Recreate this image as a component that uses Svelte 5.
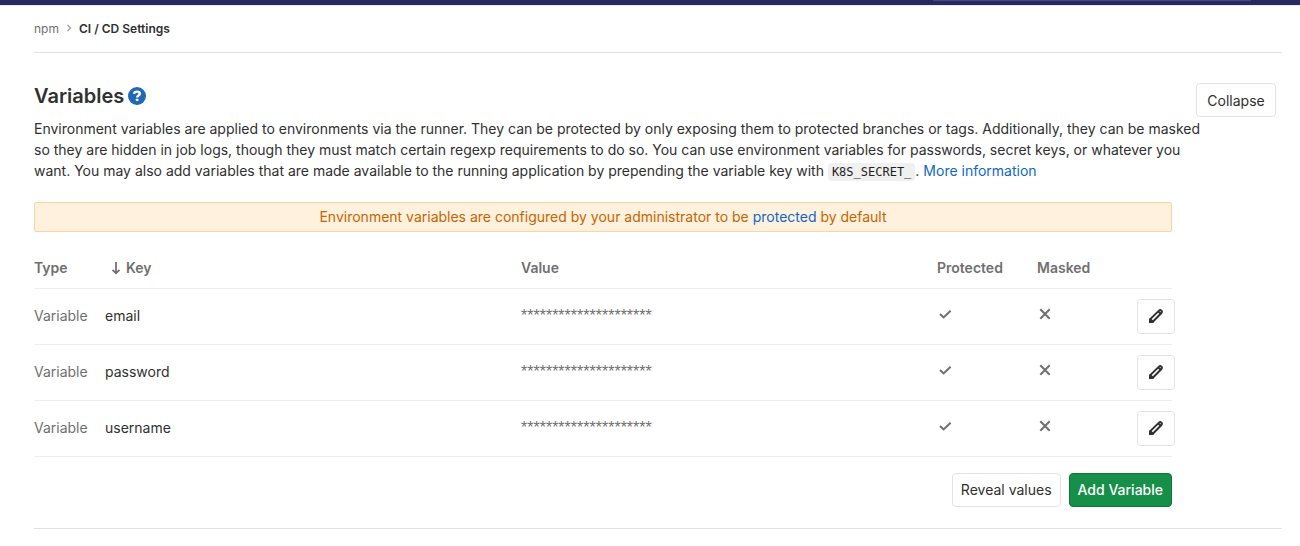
<script lang="ts">
	interface Variable {
		type: string;
		key: string;
		value: string;
		protected: boolean;
		masked: boolean;
	}

	const MASK = '*'.repeat(21);

	const variables: Variable[] = [
		{ type: 'Variable', key: 'email', value: '', protected: true, masked: false },
		{ type: 'Variable', key: 'password', value: '', protected: true, masked: false },
		{ type: 'Variable', key: 'username', value: '', protected: true, masked: false }
	];

	let expanded = $state(true);
	let revealed = $state(false);
	let ascending = $state(true);

	const rows = $derived(
		[...variables].sort((a, b) => (ascending ? 1 : -1) * a.key.localeCompare(b.key))
	);
</script>

{#snippet flag(on: boolean)}
	<svg class="flag" viewBox="0 0 16 16" role="img" aria-label={on ? 'Yes' : 'No'}>
		{#if on}
			<path d="M3 8 6.6 11.4 13.6 4.8" />
		{:else}
			<path d="M3.3 3.3 12.7 12.7M12.7 3.3 3.3 12.7" />
		{/if}
	</svg>
{/snippet}

<header class="navbar"><div class="search"></div></header>

<main>
	<nav class="breadcrumbs" aria-label="Breadcrumbs">
		<a href="#npm">npm</a>
		<svg class="chevron" viewBox="0 0 8 8" aria-hidden="true"><path d="M2.5 1 5.5 4 2.5 7" /></svg>
		<a class="current" href="#settings">CI / CD Settings</a>
	</nav>

	<section class="settings">
		<div class="content">
			<h1>
				Variables
				<a class="help" href="#help" aria-label="Help">
					<svg viewBox="0 0 18 18" aria-hidden="true">
						<circle cx="9" cy="9" r="9" />
						<path d="M6 6.8C6.3 5.2 7.4 4.6 9 4.6c1.7 0 2.8 0.8 2.8 2.1 0 1.9-2.7 1.7-2.7 3.9" />
						<rect x="7.9" y="11.8" width="2.5" height="2.3" rx="0.4" />
					</svg>
				</a>
			</h1>

			<p class="description">
				Environment variables are applied to environments via the runner. They can be protected by
				only exposing them to protected branches or tags. Additionally, they can be masked<br />
				so they are hidden in job logs, though they must match certain regexp requirements to do so.
				You can use environment variables for passwords, secret keys, or whatever you<br />
				want. You may also add variables that are made available to the running application by
				prepending the variable key with <code>K8S_SECRET_</code>. <a href="#more">More information</a>
			</p>

			{#if expanded}
				<p class="alert">
					Environment variables are configured by your administrator to be
					<a href="#protected">protected</a> by default
				</p>

				<table>
					<colgroup>
						<col class="col-type" />
						<col />
						<col />
						<col class="col-flag" />
						<col class="col-flag" />
						<col class="col-actions" />
					</colgroup>
					<thead>
						<tr>
							<th>Type</th>
							<th aria-sort={ascending ? 'ascending' : 'descending'}>
								<button class="sort" onclick={() => (ascending = !ascending)}>
									<svg class:flipped={!ascending} viewBox="0 0 10 14" aria-hidden="true">
										<path d="M5 1V12M1.5 8.8 5 12.2 8.5 8.8" />
									</svg>
									Key
								</button>
							</th>
							<th>Value</th>
							<th>Protected</th>
							<th>Masked</th>
							<th></th>
						</tr>
					</thead>
					<tbody>
						{#each rows as row (row.key)}
							<tr>
								<td class="muted">{row.type}</td>
								<td>{row.key}</td>
								<td class="value">{revealed ? row.value : MASK}</td>
								<td>{@render flag(row.protected)}</td>
								<td>{@render flag(row.masked)}</td>
								<td class="edit-cell">
									<button class="btn edit" aria-label="Edit {row.key}">
										<svg viewBox="0 0 16 16" aria-hidden="true">
											<path class="tip" d="M1 15V11L2.6 10 6 13.4 5 15Z" />
											<path
												d="M2 14V11.4L11 2.6a1.6 1.6 0 0 1 2.3 0l.1.1a1.6 1.6 0 0 1 0 2.3L4.6 14ZM10.2 3.4 12.6 5.8"
											/>
										</svg>
									</button>
								</td>
							</tr>
						{/each}
					</tbody>
				</table>

				<div class="actions">
					<button class="btn" onclick={() => (revealed = !revealed)}>
						{revealed ? 'Hide values' : 'Reveal values'}
					</button>
					<button class="btn success">Add Variable</button>
				</div>
			{/if}
		</div>

		<button class="btn toggle" aria-expanded={expanded} onclick={() => (expanded = !expanded)}>
			{expanded ? 'Collapse' : 'Expand'}
		</button>
	</section>
</main>

<style>
	:global(body) {
		margin: 0;
		background: #fff;
		color: #303030;
		font: 14px/21px Inter, 'Liberation Sans', sans-serif;
	}

	a {
		color: #1068bf;
		text-decoration: none;
	}

	path {
		fill: none;
		stroke: currentColor;
		stroke-width: 2;
	}

	.navbar {
		height: 5px;
		padding-right: 49px;
		background: #292961;
		border-bottom: 1px solid #e8e8ef;
	}

	.search {
		width: 318px;
		height: 1px;
		margin-left: auto;
		background: #494983;
	}

	main {
		padding: 0 18px 0 34px;
	}

	.breadcrumbs {
		display: flex;
		align-items: center;
		gap: 6px;
		box-sizing: border-box;
		height: 47px;
		padding-bottom: 2px;
		border-bottom: 1px solid #e1e1e1;
		font-size: 12px;
	}

	.breadcrumbs a {
		color: #707070;
	}

	.breadcrumbs .current {
		color: #303030;
		font-weight: 600;
	}

	.chevron {
		width: 8px;
		height: 8px;
		color: #999;
	}

	.chevron path {
		stroke-width: 1.2;
	}

	.settings {
		display: flex;
		align-items: flex-start;
		gap: 24px;
		padding: 30px 6px 21px 0;
		border-bottom: 1px solid #e1e1e1;
	}

	.content {
		flex: 1;
		min-width: 0;
	}

	h1 {
		display: flex;
		align-items: center;
		gap: 4px;
		margin: 0 0 9px;
		font-size: 20px;
		line-height: 26px;
		font-weight: 600;
	}

	.help {
		display: flex;
	}

	.help svg {
		width: 18px;
		height: 18px;
	}

	.help circle {
		fill: #1f69b7;
	}

	.help path {
		stroke: #fff;
		stroke-width: 2.4;
	}

	.help rect {
		fill: #fff;
	}

	/* long lines may run on into the space below the toggle */
	.description {
		margin: 0 -40px 21px 0;
	}

	code {
		padding: 2px 4px;
		border-radius: 4px;
		background: #f0f0f0;
		color: #1f1f1f;
		font: 12px 'DejaVu Sans Mono', monospace;
	}

	.alert {
		margin: 0 0 16px;
		padding: 4px;
		border: 1px solid #fcd59c;
		border-radius: 2px;
		background: #fff1de;
		color: #c26700;
		line-height: 20px;
		text-align: center;
	}

	table {
		width: 100%;
		table-layout: fixed;
		border-collapse: collapse;
	}

	.col-type {
		width: 71px;
	}

	.col-flag {
		width: 100px;
	}

	.col-actions {
		width: 35px;
	}

	th,
	td {
		box-sizing: border-box;
		padding: 0 0 2px;
		border-bottom: 1px solid #eee;
		text-align: left;
	}

	th {
		height: 40px;
		padding: 0;
		color: #707070;
		font-weight: 600;
	}

	td {
		height: 56px;
	}

	.muted,
	.value {
		color: #707070;
	}

	.value {
		font-family: 'Liberation Sans', sans-serif;
		font-size: 16px;
	}

	.edit-cell {
		padding: 0;
	}

	.sort {
		display: flex;
		align-items: center;
		gap: 5px;
		padding: 0 0 0 6px;
		border: 0;
		background: none;
		color: inherit;
		font: inherit;
		cursor: pointer;
	}

	.sort svg {
		width: 10px;
		height: 14px;
	}

	.sort path {
		stroke-width: 1.8;
	}

	.flipped {
		transform: rotate(180deg);
	}

	.flag {
		display: block;
		width: 16px;
		height: 16px;
		margin-bottom: 2px;
		color: #707070;
	}

	.btn {
		flex: none;
		height: 34px;
		padding: 0 8px;
		border: 1px solid #e3e3e3;
		border-radius: 4px;
		background: #fff;
		color: #303030;
		font: inherit;
		cursor: pointer;
	}

	.toggle {
		min-width: 80px;
	}

	.edit {
		display: block;
		height: 35px;
		padding: 0 10px;
	}

	.edit svg {
		display: block;
		width: 16px;
		height: 16px;
	}

	.edit .tip {
		fill: currentColor;
		stroke: none;
	}

	.success {
		border-color: #12753a;
		background: #168f48;
		color: #fff;
		font-weight: 500;
	}

	.actions {
		display: flex;
		justify-content: flex-end;
		gap: 8px;
		margin-top: 16px;
	}
</style>
